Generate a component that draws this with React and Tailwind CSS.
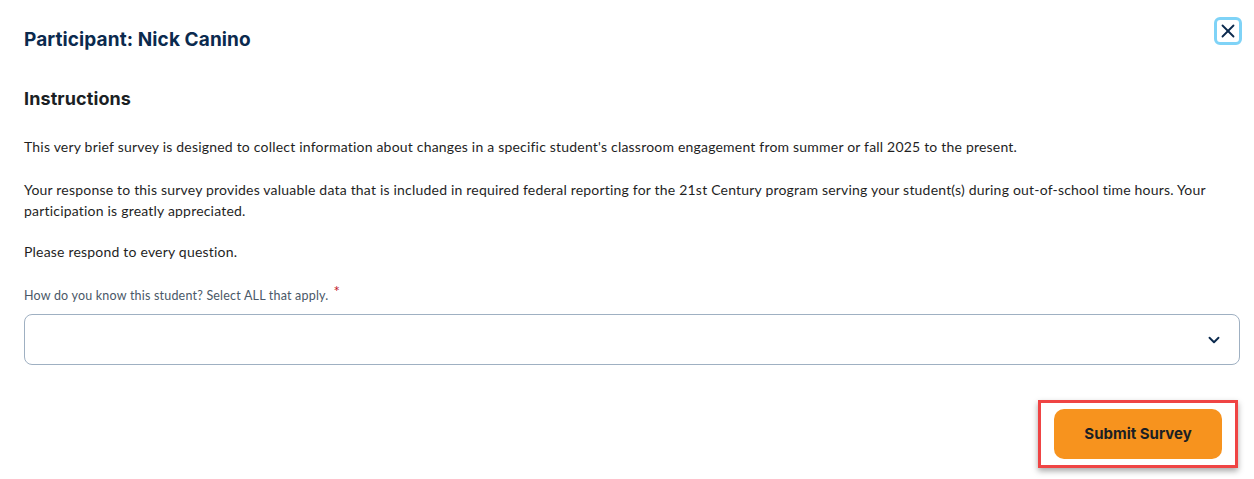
import { ChevronDown, X } from 'lucide-react';

const HEAD = { fontFamily: '"Inter", "Open Sans", sans-serif' };

const App = () => {
  return (
    <div className="w-[1254px] h-[479px] bg-white overflow-hidden" style={{ fontFamily: '"Lato", "Open Sans", sans-serif' }}>
      {/* Cabecera */}
      <div className="flex items-start justify-between pl-6 pr-3 pt-[17px]">
        <h2 className="text-[19px] font-bold text-[#0b2a4e] mt-[12px] leading-[22px] tracking-[0.1px]" style={HEAD}>
          Participant: Nick Canino
        </h2>
        <button className="w-[28px] h-[28px] flex items-center justify-center rounded-[6px] border-[3px] border-[#7fd3f7] text-[#0b2a4e]">
          <X className="w-[22px] h-[22px]" strokeWidth={2} />
        </button>
      </div>

      <div className="pl-6 pr-[14px]">
        <h3 className="text-[18px] font-bold text-[#1b1f24] mt-[37px] leading-[22px] tracking-[0.1px]" style={HEAD}>
          Instructions
        </h3>

        <div className="text-[14px] leading-[21px] text-[#1f1f1f] mt-[26px] tracking-[0.2px]">
          <p>
            This very brief survey is designed to collect information about changes in a specific student's classroom engagement from summer or fall 2025 to the present.
          </p>
          <p className="mt-[22px] pr-2">
            Your response to this survey provides valuable data that is included in required federal reporting for the 21st Century program serving your student(s) during out-of-school time hours. Your participation is greatly appreciated.
          </p>
          <p className="mt-[20px]">Please respond to every question.</p>
        </div>

        {/* Pregunta */}
        <div className="mt-[26px]">
          <label className="text-[12.5px] leading-[16px] text-[#4a5868] flex items-start tracking-[0.2px]">
            How do you know this student? Select ALL that apply.
            <span className="text-[#c0171f] text-[15px] leading-[12px] ml-[5px] -mt-[3px]">*</span>
          </label>
          <div className="mt-[10px] h-[51px] border border-[#9fb0c2] rounded-[8px] flex items-center justify-end pr-[16px]">
            <ChevronDown className="w-[18px] h-[18px] text-[#0b2a4e]" strokeWidth={2.5} />
          </div>
        </div>

        {/* Botón */}
        <div className="flex justify-end mt-[35px] pr-[2px]">
          <div className="border-[3px] border-[#ef4444] shadow-[0_3px_6px_rgba(0,0,0,0.35)] px-[13px] py-[6px]">
            <button className="w-[168px] h-[50px] rounded-[10px] bg-[#f7931e] text-[15px] font-bold text-[#1b1f24]" style={HEAD}>
              Submit Survey
            </button>
          </div>
        </div>
      </div>
    </div>
  );
};

export default App;
